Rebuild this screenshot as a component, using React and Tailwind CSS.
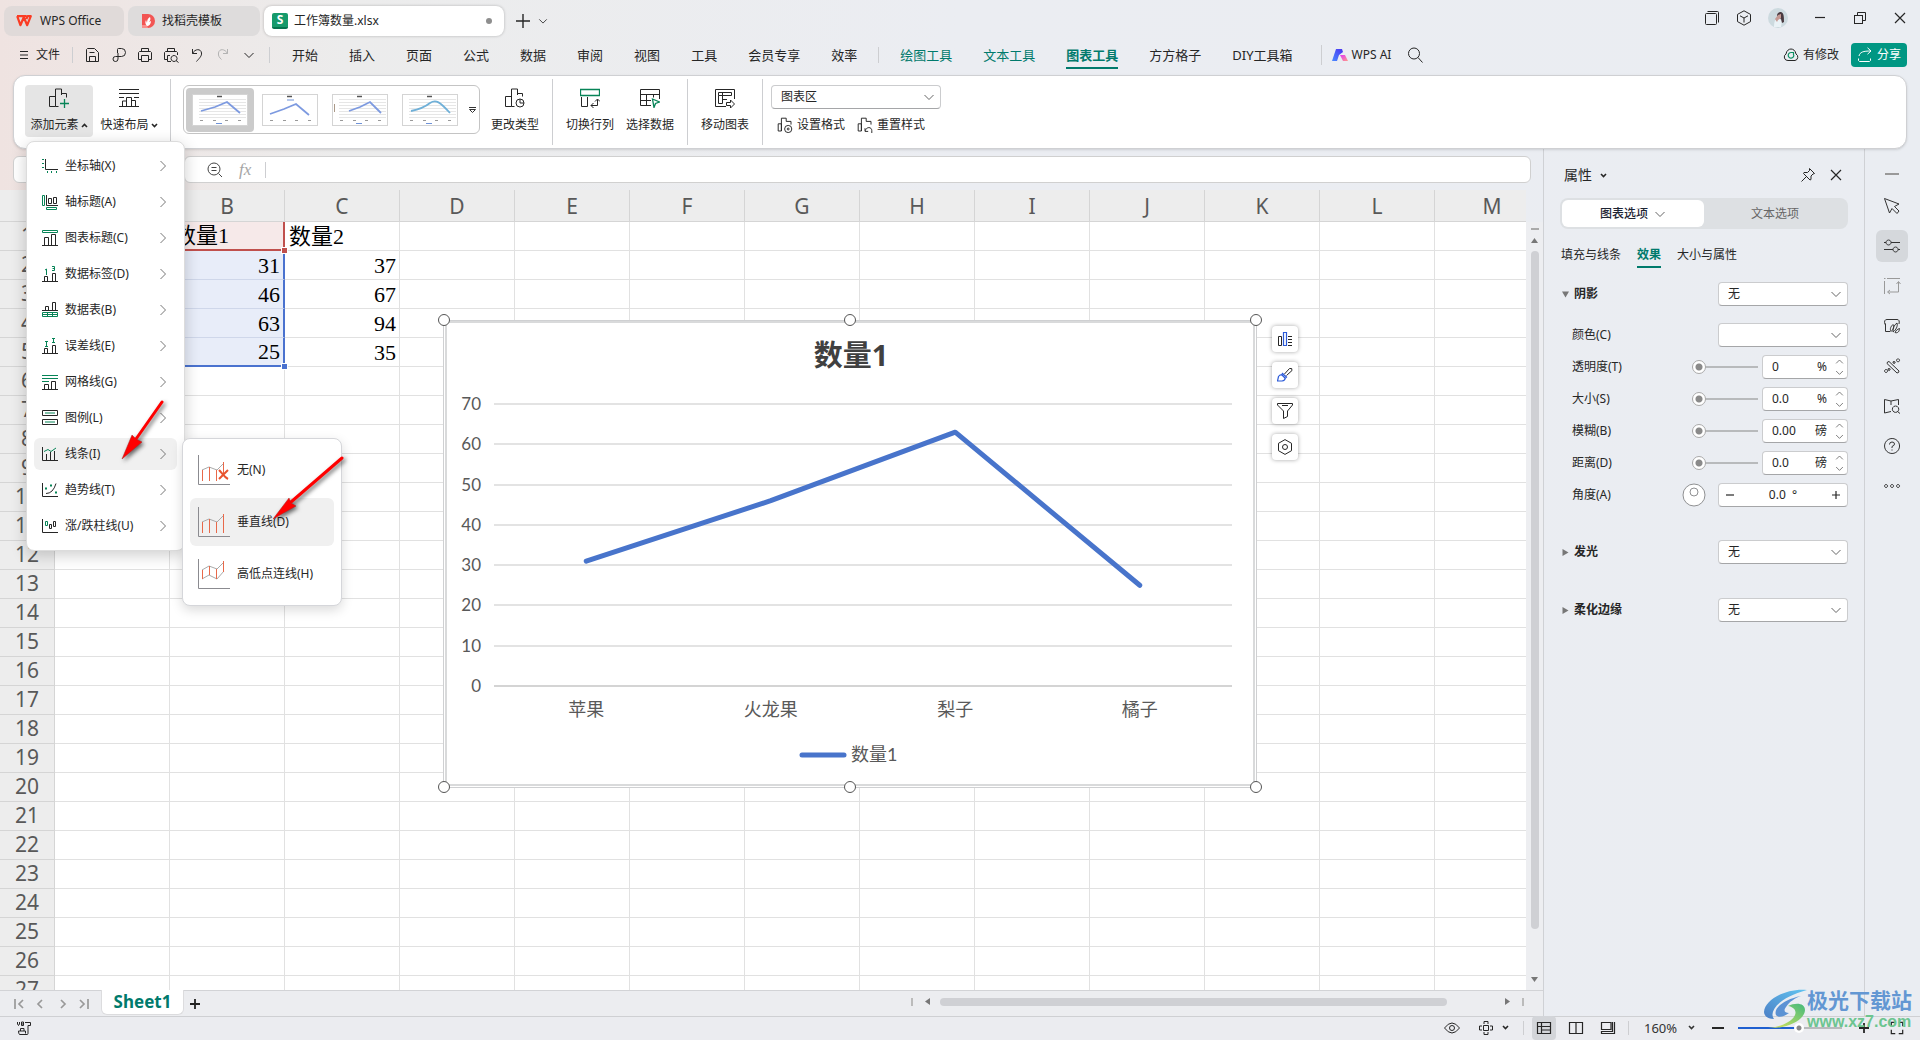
import { Fragment } from "react";

const Icon = ({ children, size = 16, box = 16, className = "" }) => (
    <svg
        width={size}
        height={size}
        viewBox={`0 0 ${box} ${box}`}
        fill="none"
        stroke="currentColor"
        strokeWidth="1"
        className={`shrink-0 ${className}`}
        aria-hidden="true"
    >
        {children}
    </svg>
);

const Chevron = ({ dir = "down", size = 12, className = "" }) => {
    const paths = {
        down: "M1.5 4l4.5 4.5L10.5 4",
        up: "M1.5 8.5L6 4l4.5 4.5",
        right: "M3.5 1L8.500 6l-5 5",
    };
    return (
        <Icon size={size} box={12} className={className}>
            <path d={paths[dir]} />
        </Icon>
    );
};

const Caret = ({ up }) => (
    <svg width="7" height="5" viewBox="0 0 7 5" fill="none" stroke="currentColor" strokeWidth="1.6" aria-hidden="true">
        <path d={up ? "M1 4l2.5-2.5L6 4" : "M1 1l2.5 2.5L6 1"} />
    </svg>
);

const VLine = ({ className = "" }) => <span className={`w-px shrink-0 bg-[#cdced1] ${className}`} />;

const Select = ({ label, value, className = "" }) => (
    <div className={`relative ${className}`}>
        <select
            aria-label={label}
            defaultValue={value}
            className="block h-6 w-full appearance-none rounded border border-[#cbccce] border-b-[#a5a6a8] bg-white pl-[9px] text-xs"
        >
            <option value={value}>{value}</option>
        </select>
        <Chevron className="pointer-events-none absolute top-1.5 right-1.5 text-[#666]" />
    </div>
);

/* ---------- Title bar ---------- */

const TitleBar = () => (
    <div className="flex h-9 items-end justify-between pl-1 pr-3">
        <div className="flex items-center gap-1">
            <button className="flex h-[30px] w-[120px] items-center gap-2 rounded-lg bg-[#e0dad9] pl-3 text-xs">
                <svg width="16" height="12" viewBox="0 0 16 12" aria-hidden="true">
                    <path d="M1 1.2h9.5M1.2 1.2l3.2 9 3.4-8 3.4 8 3.6-9h-3.2l-1.2 3" fill="none" stroke="#fa3c24" strokeWidth="2.2" strokeLinejoin="round" />
                </svg>
                WPS Office
            </button>
            <button className="flex h-[30px] w-[132px] items-center gap-1.5 rounded-lg bg-[#dedcdc] pl-3 text-xs">
                <svg width="16" height="16" viewBox="0 0 16 16" aria-hidden="true">
                    <path d="M2 1h6a7 7 0 0 1 0 14H2z" fill="#f25553" />
                    <path d="M2 12h5l1 3H2z" fill="#f98f8c" />
                    <path d="M7 13c-2-2-2-4-1-6l1 3c0-3 1-5 3-6 1 2 0 4-1 5l2-1c0 3-2 5-4 5z" fill="#fff" />
                </svg>
                找稻壳模板
            </button>
            <button className="flex h-[30px] w-60 items-center gap-1.5 rounded-lg bg-white pl-2 pr-3 text-xs shadow-[0_0_3px_rgba(0,0,0,0.25)]">
                <span className="flex h-4 w-4 items-center justify-center rounded-[2px] border-b-2 border-[#06734e] bg-[#169a6b] text-xs font-bold leading-none text-white">
                    S
                </span>
                工作簿数量.xlsx
                <span className="ml-auto h-1.5 w-1.5 rounded-full bg-[#8e8e8e]" />
            </button>
            <button aria-label="新建" className="ml-1 p-1">
                <Icon size={14} box={14}>
                    <path d="M7 0v14M0 7h14" strokeWidth="1.4" />
                </Icon>
            </button>
            <button aria-label="标签列表">
                <Chevron size={10} />
            </button>
        </div>
        <div className="flex items-center gap-6 pb-2">
            <div className="flex items-center gap-4">
                <button aria-label="窗口">
                    <Icon>
                        <rect x="1.5" y="3.5" width="11" height="11" rx="1" />
                        <path d="M3.5 1.5h10a1 1 0 0 1 1 1v10" />
                    </Icon>
                </button>
                <button aria-label="应用">
                    <Icon>
                        <path d="M8 .8l6.5 3.6v7.2L8 15.200l-6.500-3.600V4.400zM4 5.800L8 8l4-2.200M8 8v4.500" />
                    </Icon>
                </button>
                <svg width="20" height="20" viewBox="0 0 20 20" aria-hidden="true">
                    <circle cx="10" cy="10" r="10" fill="#cddadf" />
                    <path d="M6 19c0-5 1-8 4-9l4 3-1 6z" fill="#eaf2f6" />
                    <path d="M9 8c0-3 2-4 4-4 3 1 3 5 3 10l-2 1-1-4z" fill="#4a3a40" />
                    <path d="M7 11l3-4 3-1v4l-3 2-1 2z" fill="#c59a94" />
                </svg>
            </div>
            <button aria-label="最小化">
                <Icon>
                    <path d="M3 7.5h10" strokeWidth="1.2" />
                </Icon>
            </button>
            <button aria-label="还原">
                <Icon>
                    <rect x="2.5" y="5.5" width="8" height="8" />
                    <path d="M5.5 5.5v-3h8v8h-3" />
                </Icon>
            </button>
            <button aria-label="关闭">
                <Icon>
                    <path d="M3 3l10 10M13 3L3 13" strokeWidth="1.2" />
                </Icon>
            </button>
        </div>
    </div>
);

/* ---------- Menu bar ---------- */

const quickTools = [
    { name: "保存", d: "M1.500 14.500v-12l1-1h7l4 4v9zM4.500 5.500h5M4.500 14.500v-5h6v5" },
    { name: "输出为PDF", d: "M6.500 6V2.500q0-1 1-1h3a4 4 0 0 1 0 8H4.500a2.500 2.500 0 1 0 2.500 2.500V6" },
    { name: "打印", d: "M4.500 4.500v-3h7v3M4 12.500H1.500V5.500l1-1h11l1 1v7H12M4.500 8.500h7v6h-7z" },
    { name: "打印预览", d: "M4.500 4.500v-3h7v3M5 12.500H1.500V5.500l1-1h11l1 1V8M7 8.500H4.500v6H8M11 8.500a3 3 0 1 0 .1 0M13 13.500l2.500 2" },
    { name: "撤销", d: "M3.500 2v4.500H8M3.500 6.500C6 1.500 12 1.500 12.500 6c.5 3-2.500 5.500-5 8.500" },
    { name: "恢复", d: "M12.500 2v4.500H8M12.500 6.500C10 1.500 4 1.500 3.500 6c-.5 3 1 4.500 3 6.500", muted: true },
    { name: "更多", d: "M3.500 6l4.500 4.500L12.500 6" },
];
const menus = ["开始", "插入", "页面", "公式", "数据", "审阅", "视图", "工具", "会员专享", "效率"];
const contextMenus = ["绘图工具", "文本工具", "图表工具", "方方格子", "DIY工具箱"];

const MenuBar = () => (
    <div className="flex h-[39px] items-center pl-5 pr-[13px] pb-0.5">
        <button className="flex items-center gap-2 text-xs">
            <Icon size={8} box={8}>
                <path d="M0 .5h8M0 4h8M0 7.5h8" />
            </Icon>
            文件
        </button>
        <VLine className="mx-3 h-4" />
        <div className="flex items-center gap-2.5">
            {quickTools.map((t) => (
                <button key={t.name} aria-label={t.name} className={t.muted ? "text-[#b3b3b3]" : ""}>
                    <Icon>
                        <path d={t.d} />
                    </Icon>
                </button>
            ))}
        </div>
        <VLine className="ml-3 mr-[22px] h-4" />
        <nav className="flex gap-[31px] text-[13px] leading-5">
            {menus.map((m) => (
                <a key={m} href="#">
                    {m}
                </a>
            ))}
        </nav>
        <VLine className="mx-[21px] h-4" />
        <nav className="flex gap-[31px] text-[13px] leading-5">
            {contextMenus.map((m, i) => (
                <a
                    key={m}
                    href="#"
                    className={
                        i === 2
                            ? "relative font-bold text-[#007a6c] after:absolute after:-bottom-1 after:left-0 after:h-0.5 after:w-full after:bg-[#007a6c]"
                            : i < 2
                              ? "text-[#007a6c]"
                              : ""
                    }
                >
                    {m}
                </a>
            ))}
        </nav>
        <VLine className="ml-7 mr-2.5 h-5" />
        <button className="flex items-center gap-1 text-xs">
            <svg width="16" height="12" viewBox="0 0 16 12" aria-hidden="true">
                <defs>
                    <linearGradient id="ai-blue" x1="0" y1="1" x2="1" y2="0">
                        <stop offset="0" stopColor="#4a8bff" />
                        <stop offset="1" stopColor="#4b32f0" />
                    </linearGradient>
                    <linearGradient id="ai-pink" x1="0" y1="0" x2="1" y2="1">
                        <stop offset="0" stopColor="#e23cf5" />
                        <stop offset="1" stopColor="#ff9a8a" />
                    </linearGradient>
                </defs>
                <path d="M0 12L4 0h6l1 3-4 3-2 6z" fill="url(#ai-blue)" />
                <path d="M8 6h5l3 6h-5z" fill="url(#ai-pink)" />
            </svg>
            WPS AI
        </button>
        <button aria-label="搜索" className="ml-4">
            <Icon>
                <circle cx="7" cy="6.5" r="5.5" />
                <path d="M11 10.5l4.500 5" />
            </Icon>
        </button>
        <div className="ml-auto flex items-center gap-3 text-xs">
            <button className="flex items-center gap-1">
                <Icon>
                    <path d="M5 13.500h7a3.500 3.500 0 0 0 1-6.500C12.500 3.500 10 2 8 2S3.500 3.500 3 7a3.500 3.500 0 0 0 2 6.500z" />
                    <path d="M8 5.500a2.800 2.800 0 1 0 2.800 2.500M7.500 5.500h3v2.500" stroke="#0b8f62" strokeWidth="1.2" />
                </Icon>
                有修改
            </button>
            <button className="flex h-6 w-14 items-center justify-center gap-1 rounded bg-[#009783] text-white">
                <Icon>
                    <path d="M2 9c1-4 4-5 12-5M10.500.8L14 4l-3.500 3.200M1.500 11.500v2l1 1h10l1-1v-2" />
                </Icon>
                分享
            </button>
        </div>
    </div>
);

/* ---------- Ribbon ---------- */

const green = "#078457";

const elementMenu = [
    {
        label: "坐标轴(X)",
        icon: (
            <>
                <path d="M3.5 1v10.500H16" />
                <path d="M0 1.500h2M0 5.500h2M0 9.500h2M5.500 13v2M9.500 13v2M14.500 13v2" stroke={green} />
            </>
        ),
    },
    {
        label: "轴标题(A)",
        icon: (
            <>
                <path d="M4.500 1v10.500H16M6.500 4.500h3v5h-3zM11.500 3.500h3v6h-3z" />
                <path d="M.5 1.500h2v10h-2zM4.500 13.500h10v2h-10z" stroke={green} />
            </>
        ),
    },
    {
        label: "图表标题(C)",
        icon: (
            <>
                <path d="M0 15.500h16M2.500 15V7.500h4V15M9.500 15V4.500h4V15" />
                <path d="M.5.500h15v2H.5z" stroke={green} />
            </>
        ),
    },
    {
        label: "数据标签(D)",
        icon: (
            <>
                <path d="M0 15.500h16M2.500 15v-4.500h3V15M10.500 15V7.500h3V15" />
                <path d="M3 4l1.500-1v6M10 .5h2.500v4H10M10.500 2.500h2" stroke={green} />
            </>
        ),
    },
    {
        label: "数据表(B)",
        icon: (
            <>
                <path d="M0 8.500h16M3.500 8V4.500h3V8M10.500 8V.5h3V8" />
                <path d="M.5 10.500h15v4H.5zM.5 12.500h15M5.500 10.500v4M10.500 10.500v4" stroke={green} />
            </>
        ),
    },
    {
        label: "误差线(E)",
        icon: (
            <>
                <path d="M0 15.500h16M2.500 15v-4.500h3V15M10.500 15V7.500h3V15" />
                <path d="M3 3.500h3M4.500 3.500v5M3 8.500h3M10 .5h3M11.500.5v4M10 4.500h3" stroke={green} />
            </>
        ),
    },
    {
        label: "网格线(G)",
        icon: (
            <>
                <path d="M0 15.500h16M2.500 15v-4.500h4V15M9.500 15V7.500h4V15" />
                <path d="M0 1.500h16M0 4.500h16M0 7.500h7" stroke={green} />
            </>
        ),
    },
    {
        label: "图例(L)",
        icon: (
            <>
                <path d="M.5.500h15v5H.5zM.5 9.500h15v5H.5z" />
                <path d="M3 3h10M3 12h10" stroke={green} />
            </>
        ),
    },
    {
        label: "线条(I)",
        icon: (
            <>
                <path d="M.5 1v13.500H16M4.500 8v6M8.500 6v8M12.500 5v9" />
                <path d="M2 5.500l4-2 3 2 5-3.500" stroke={green} />
            </>
        ),
    },
    {
        label: "趋势线(T)",
        icon: (
            <>
                <path d="M.5 1v13.500H16M4 11.500q7 0 10-10" />
                <path d="M3 6.500h2M8 3.500h2M13 10.500h2" stroke={green} strokeWidth="2" />
            </>
        ),
    },
    {
        label: "涨/跌柱线(U)",
        icon: (
            <>
                <path d="M.5 1v13.500H16M7.500 6.500h2v4h-2zM11.500 3.500h2v5h-2z" />
                <path d="M3.500 3.500h2v4h-2z" stroke={green} />
            </>
        ),
    },
];

const lineMenu = [
    {
        label: "无(N)",
        icon: (
            <>
                <path d="M4 16l7-3 8 3 7-7" stroke="#aaa" />
                <path d="M4.500 27V16M11.500 27V13M18.500 27V16M25.500 20V8" stroke="#e8694a" />
                <path d="M21 16c3 3 5 7 9 9M30 16c-3 3-6 6-9 9" stroke="#e8542f" strokeWidth="2" />
            </>
        ),
    },
    {
        label: "垂直线(D)",
        icon: (
            <>
                <path d="M4 16l7-3 8 3 7-7" stroke="#aaa" />
                <path d="M4.500 27V16M11.500 27V13M18.500 27V16M25.500 27V8" stroke="#e8694a" />
            </>
        ),
    },
    {
        label: "高低点连线(H)",
        icon: (
            <>
                <path d="M4 12l7-4 8 3 7-7M4 21l7-4 8 4 7-8" stroke="#aaa" />
                <path d="M4.500 21v-9M11.500 17V8M18.500 21V11M25.500 14V3" stroke="#e8694a" />
            </>
        ),
    },
];

const LineSubmenu = () => (
    <ul className="absolute left-[148px] top-0 z-10 flex w-40 flex-col gap-1 rounded-lg border border-[#d5d6da] bg-white p-[7px] shadow-[0_4px_12px_rgba(0,0,0,0.15)]">
        {lineMenu.map((m, i) => (
            <li key={m.label}>
                <button
                    className={`flex h-12 w-full items-center gap-[7px] rounded-md pl-2 text-xs whitespace-nowrap ${i === 1 ? "bg-[#f0f0f0]" : ""}`}
                >
                    <Icon size={32} box={32}>
                        <path d="M.5 1v29.500H32" stroke="#8b8b90" />
                        {m.icon}
                    </Icon>
                    {m.label}
                </button>
            </li>
        ))}
    </ul>
);

const ElementMenu = () => (
    <ul className="absolute left-px top-14 z-30 flex w-[159px] flex-col gap-1 rounded-lg border border-[#dcdcdc] bg-white px-[7px] py-2 shadow-[0_4px_16px_rgba(0,0,0,0.2)]">
        {elementMenu.map((m, i) => (
            <li key={m.label} className="relative">
                <button className={`flex h-8 w-full items-center gap-[7px] rounded-md px-2 text-xs ${i === 8 ? "bg-[#f0f0f0]" : ""}`}>
                    <Icon>{m.icon}</Icon>
                    {m.label}
                    <Chevron dir="right" className="ml-auto text-[#777]" />
                </button>
                {i === 8 && <LineSubmenu />}
            </li>
        ))}
    </ul>
);

const RibbonButton = ({ label, icon, caret, active, wide }) => (
    <button
        className={`flex h-[52px] flex-col items-center justify-between rounded pt-[3px] pb-1 text-xs ${wide ? "w-[68px]" : "w-[60px]"} ${active ? "bg-[#e5e5e5]" : ""}`}
    >
        <Icon size={20} box={20}>
            {icon}
        </Icon>
        <span className="flex items-center gap-0.5 leading-4 whitespace-nowrap">
            {label}
            {caret && <Caret up={caret === "up"} />}
        </span>
    </button>
);

const thumbs = [
    "M9 17l14-4 12-5 13 11",
    "M8 20l14-5 12-5 13 11",
    "M17 17l11-4 10-5 11 11",
    "M9 17c10-2 14-4 19-8 6-4 10-1 20 10",
];

const StyleGallery = () => (
    <div className="flex h-[49px] w-[297px] gap-0.5 rounded-md border border-[#c4c4c4] py-0.5 pl-0.5">
        {thumbs.map((d, i) => (
            <button
                key={d}
                aria-label={`样式${i + 1}`}
                className={`flex h-11 w-[68px] shrink-0 items-center justify-center rounded ${i === 0 ? "bg-[#cbcbcb]" : ""}`}
            >
                <svg width="56" height="32" viewBox="0 0 56 32" fill="none" className="bg-white" aria-hidden="true">
                    <rect x=".5" y=".5" width="55" height="31" stroke="#d4d4d4" />
                    {i !== 1 && <path d="M7 5.500h47M7 8.500h47M7 11.500h47M7 14.500h47M7 17.500h47M7 20.500h47M7 23.500h47" stroke="#e6e6e6" />}
                    <path d="M25 2.500h5" stroke="#555" strokeWidth="1.500" />
                    <path d="M8 26.500h3M21 26.500h3M33 26.500h3M46 26.500h3" stroke="#999" />
                    {i === 2 && <path d="M2.500 10v8" stroke="#a98" />}
                    <path d={i === 1 ? "M25 6h7" : "M24 29.500h6"} stroke="#6f93d8" />
                    <path d={d} stroke={i === 3 ? "#6fb0d8" : "#7d9ae0"} strokeWidth="1.800" />
                </svg>
            </button>
        ))}
        <button aria-label="更多样式" className="flex flex-1 items-center justify-center">
            <svg width="7" height="6" viewBox="0 0 7 6" fill="none" stroke="#333" aria-hidden="true">
                <path d="M0 .5h7M.5 2.500h6l-3 3z" />
            </svg>
        </button>
    </div>
);

const bars = "M1.500 17.500h4v-9h-4zM5.500 17.500v-16h6v4";

const RibbonLine = () => <VLine className="mx-[7px] h-[66px] self-center" />;

const Ribbon = () => (
    <div className="relative z-20 mx-[13px] flex h-[74px] items-start rounded-xl border border-[#cfd0d3] bg-white pl-[11px] shadow-sm">
        <div className="flex gap-0.5 pt-[9px]">
            <div className="relative">
                <RibbonButton
                    wide
                    active
                    caret="up"
                    label="添加元素"
                    icon={
                        <>
                            <path d="M.5 18.500h6v-10h-6zM6.500 18.500h3M6.500 10v-9h6v6M12.500 5.500h5v4" />
                            <path d="M15.500 11v9M11 15.500h9" stroke={green} strokeWidth="1.300" />
                        </>
                    }
                />
                <ElementMenu />
            </div>
            <RibbonButton
                wide
                caret="down"
                label="快速布局"
                icon={<path d="M0 1.500h20M0 5.500h20M0 9.500h5M0 18.500h20M3.500 18v-5h4v5M7.500 18V9.500h5V18M12.500 12.500h4V18M15 9.500h5" />}
            />
        </div>
        <RibbonLine />
        <div className="pl-[5px] pt-[9px]">
            <StyleGallery />
        </div>
        <div className="pl-[5px] pt-[9px]">
            <RibbonButton
                label="更改类型"
                icon={
                    <>
                        <path d="M.5 18.500h6v-10h-6zM6.500 18.500h3M6.500 10v-9h6v6M12.500 5.500h5v3" />
                        <circle cx="15" cy="15" r="4" />
                        <path d="M15 11v4h4" />
                    </>
                }
            />
        </div>
        <RibbonLine />
        <div className="flex pt-[9px]">
            <RibbonButton
                label="切换行列"
                icon={
                    <>
                        <path d="M.5 1.500h19v6H.5z" stroke={green} strokeWidth="1.300" />
                        <path d="M1.500 9v9.500h6V9M11 17.500h6.500v-6M13.500 15L11 17.500l2.500 2.500M15 13.500l2.500-2.500 2.500 2.500" />
                    </>
                }
            />
            <RibbonButton
                label="选择数据"
                icon={
                    <>
                        <path d="M11 17.500H.5v-16h19V11M.5 6.500h19M.5 12.500H11M6.500 6.500v11M13.500 6.500v3" />
                        <path d="M12.500 11l7 3-4 1.500-1.500 4z" stroke={green} strokeWidth="1.300" />
                    </>
                }
            />
        </div>
        <RibbonLine />
        <div className="pt-[9px]">
            <RibbonButton
                label="移动图表"
                icon={<path d="M11 18.500H.5v-17h19V11M3.500 4.500h13v3h-13zM3.500 7.500v8h4v-11M7.500 7.500v4H12M11.500 14.500h4v-2.500l4 4-4 4v-2.500h-4z" />}
            />
        </div>
        <RibbonLine />
        <div className="flex flex-col gap-[7px] pl-px pt-[9px]">
            <Select label="图表区域" value="图表区" className="w-[170px]" />
            <div className="flex gap-3 pl-1.5 text-xs leading-[18px]">
                <button className="flex items-center gap-1">
                    <Icon box={20}>
                        <path d={bars} strokeWidth="1.200" />
                        <path d="M11.500 5.500h6v4" strokeWidth="1.200" />
                        <circle cx="14" cy="15" r="4.500" strokeWidth="1.200" />
                        <circle cx="14" cy="15" r="1.200" strokeWidth="1.200" />
                    </Icon>
                    设置格式
                </button>
                <button className="flex items-center gap-1">
                    <Icon box={20}>
                        <path d={bars} strokeWidth="1.200" />
                        <path d="M11.500 5.500h6v4M10 14v4h4M10.500 17c1-5 8-5 8 0v3" strokeWidth="1.200" />
                    </Icon>
                    重置样式
                </button>
            </div>
        </div>
    </div>
);

/* ---------- Sheet ---------- */

const FormulaBar = () => (
    <div className="mr-3 ml-[13px] mt-[7px] flex h-[27px] gap-px">
        <input aria-label="名称框" className="w-[170px] rounded-md border border-[#d0d0d0] bg-white" />
        <div className="flex flex-1 items-center rounded-md border border-[#d0d0d0] bg-white pl-[22px]">
            <Icon className="text-[#444]">
                <circle cx="7" cy="7" r="6" />
                <path d="M11.500 11.500l3.500 3.500M4.500 5.500h5M4.500 8.500h5" />
            </Icon>
            <span className="ml-4 w-4 font-['Liberation_Serif',serif] text-[17px] leading-5 italic text-[#a5a5a5]">fx</span>
            <VLine className="ml-2.5 h-4" />
            <input aria-label="编辑栏" className="h-full min-w-0 flex-1 px-2 text-sm" />
        </div>
    </div>
);

const columns = ["A", "B", "C", "D", "E", "F", "G", "H", "I", "J", "K", "L", "M"];
const rows = Array.from({ length: 27 }, (_, i) => i + 1);
const cells = {
    B1: "数量1", C1: "数量2",
    B2: 31, C2: 37,
    B3: 46, C3: 67,
    B4: 63, C4: 94,
    B5: 25, C5: 35,
};

const Grid = () => (
    <table className="w-[1550px] table-fixed border-separate border-spacing-0">
        <colgroup>
            <col className="w-[55px]" />
            {columns.map((c) => (
                <col key={c} className="w-[115px]" />
            ))}
        </colgroup>
        <thead>
            <tr className="h-8 bg-[#ededed] text-[21px] leading-[30px] text-[#595959]">
                <th className="border-b border-r border-[#d5d5d5]" />
                {columns.map((c) => (
                    <th key={c} className="border-b border-r border-[#d5d5d5] p-0 font-normal">
                        {c}
                    </th>
                ))}
            </tr>
        </thead>
        <tbody>
            {rows.map((r) => (
                <tr key={r} className="h-[29px]">
                    <th className="border-b border-r border-[#d5d5d5] bg-[#ededed] p-0 pb-0.5 text-[21px] leading-[26px] font-normal text-[#595959]">{r}</th>
                    {columns.map((c) => {
                        const value = cells[c + r];
                        const picked = c === "B" && r <= 5;
                        let tone = "border-b border-r border-[#e1e1e1]";
                        if (picked && r === 1) tone = "border-b-2 border-r-2 border-[#c0504d] bg-[#f6e9e9]";
                        else if (picked && r < 5) tone = "border-b border-r-2 border-b-[#cfd7ea] border-r-[#4a72cf] bg-[#e8edf9]";
                        else if (picked) tone = "border-b-2 border-r-2 border-[#4a72cf] bg-[#e8edf9]";
                        return (
                            <td
                                key={c}
                                className={`relative pt-px pr-[3px] pb-0 pl-1 font-['Liberation_Serif','Noto_Sans_CJK_SC',serif] text-[22px] leading-[26px] text-black ${tone} ${typeof value === "number" ? "text-right" : ""}`}
                            >
                                {value}
                                {picked && r === 1 && <span className="absolute -bottom-1 -right-1 z-[1] h-[5px] w-[5px] bg-[#c0504d] outline outline-white" />}
                                {picked && r === 5 && <span className="absolute -bottom-1 -right-1 z-[1] h-[5px] w-[5px] bg-[#4a72cf] outline outline-white" />}
                            </td>
                        );
                    })}
                </tr>
            ))}
        </tbody>
    </table>
);

const series = [
    { name: "苹果", value: 31 },
    { name: "火龙果", value: 46 },
    { name: "梨子", value: 63 },
    { name: "橘子", value: 25 },
];

const Chart = () => {
    const left = 58;
    const right = 796;
    const base = 374;
    const y = (v) => base - (v * 282) / 70;
    const x = (i) => left + ((right - left) / series.length) * (i + 0.5);
    return (
        <svg width="828" height="484" viewBox="0 0 828 484" className="absolute left-[436px] top-[122px]" role="img" aria-label="数量1">
            <rect x="7.5" y="8.5" width="813" height="467" fill="#fff" stroke="#cfd0d2" />
            <rect x="10" y="10" width="808" height="463" fill="#fff" stroke="#d9dadb" strokeWidth="2" />
            <text x="415" y="54" textAnchor="middle" className="fill-[#404040] font-['Noto_Sans','Noto_Sans_CJK_SC',sans-serif] text-[29px] font-bold">
                数量1
            </text>
            {[0, 10, 20, 30, 40, 50, 60, 70].map((v) => (
                <Fragment key={v}>
                    <path d={`M${left} ${Math.round(y(v))}H${right}`} stroke={v ? "#e3e3e3" : "#d4d4d4"} strokeWidth="2" />
                    <text x="45" y={Math.round(y(v)) + 6} textAnchor="end" className="fill-[#595959] font-['Lato',sans-serif] text-[17px]">
                        {v}
                    </text>
                </Fragment>
            ))}
            <polyline
                points={series.map((s, i) => `${x(i)},${y(s.value)}`).join(" ")}
                fill="none"
                stroke="#4874cb"
                strokeWidth="5"
                strokeLinecap="round"
                strokeLinejoin="round"
            />
            {series.map((s, i) => (
                <text key={s.name} x={x(i)} y="404" textAnchor="middle" className="fill-[#595959] font-['Noto_Sans_CJK_SC',sans-serif] text-[18px]">
                    {s.name}
                </text>
            ))}
            <path d="M366 443h42" stroke="#4874cb" strokeWidth="5" strokeLinecap="round" />
            <text x="415" y="449" className="fill-[#595959] font-['Lato','Noto_Sans_CJK_SC',sans-serif] text-[18px]">
                数量1
            </text>
            {[8, 414, 820].map((cx) =>
                [8, 475].map((cy) => <circle key={`${cx}-${cy}`} cx={cx} cy={cy} r="5.5" fill="#fff" stroke="#555" />)
            )}
        </svg>
    );
};

const blue = "#2b5ad8";

const chartButtons = [
    {
        name: "图表元素",
        icon: (
            <>
                <path d="M1.500 5.500h3v9h-3zM11 5.500h4M11 8.500h4M11 11.500h4M11 14.500h4" />
                <path d="M6.500 1.500h3v13h-3z" stroke={blue} strokeWidth="1.200" />
            </>
        ),
    },
    {
        name: "图表样式",
        icon: (
            <>
                <path d="M7.500 7L12.500 1.500q3-1 2.500 2L9.500 8.500" />
                <path d="M.5 14l1-4.500q1.500-2 3-1.500l1-1.500 4 3.500-1.500 1.500q0 2-3 2.500zM5 8l3 3" stroke={blue} strokeWidth="1.200" />
            </>
        ),
    },
    { name: "筛选", icon: <path d="M.5.500h15v1.500L10.500 8v5.500l-4 2V8L.5 2zM5 2.500h6" /> },
    {
        name: "设置",
        icon: (
            <>
                <path d="M8 .6l6.500 3.700v7.400L8 15.400l-6.500-3.700V4.300z" />
                <circle cx="8" cy="8" r="2.500" />
            </>
        ),
    },
];

const SheetTabs = () => (
    <div className="flex h-[26px] items-center border-t border-[#d2d3d6] bg-[#ecedf0] pl-[13px] text-[#999]">
        <div className="flex items-center gap-2.5">
            <button aria-label="第一张">
                <Icon size={12} box={12}>
                    <path d="M2 1v10M10 2L6 6l4 4" strokeWidth="1.700" />
                </Icon>
            </button>
            <button aria-label="上一张">
                <Icon size={12} box={12}>
                    <path d="M7 2L3 6l4 4" strokeWidth="1.700" />
                </Icon>
            </button>
            <button aria-label="下一张">
                <Icon size={12} box={12}>
                    <path d="M4 2l4 4-4 4" strokeWidth="1.700" />
                </Icon>
            </button>
            <button aria-label="最后一张">
                <Icon size={12} box={12}>
                    <path d="M9 1v10M1 2l4 4-4 4" strokeWidth="1.700" />
                </Icon>
            </button>
        </div>
        <button className="ml-2.5 -mt-0.5 h-[25px] w-[83px] rounded-b-md border border-t-0 border-[#dcdcde] bg-white text-[17px] leading-6 font-bold text-[#007a6c]">
            Sheet1
        </button>
        <button aria-label="新建工作表" className="ml-1.5 text-[#222]">
            <Icon size={10} box={10}>
                <path d="M5 0v10M0 5h10" strokeWidth="1.800" />
            </Icon>
        </button>
        <div className="ml-auto flex items-center pb-1">
            <span className="h-2 w-0.5 bg-[#bbb]" />
            <svg width="5" height="7" viewBox="0 0 5 7" className="ml-3" aria-hidden="true">
                <path d="M5 0v7L0 3.500z" fill="#777" />
            </svg>
            <span className="ml-2.5 h-2 w-[507px] rounded bg-[#cfd0d4]" />
            <svg width="5" height="7" viewBox="0 0 5 7" className="ml-[58px]" aria-hidden="true">
                <path d="M0 0v7l5-3.500z" fill="#777" />
            </svg>
            <span className="ml-3 mr-[19px] h-2 w-0.5 bg-[#bbb]" />
        </div>
    </div>
);

const Sheet = () => (
    <main className="flex min-w-0 flex-1 flex-col">
        <FormulaBar />
        <div className="mt-[7px] flex min-h-0 flex-1">
            <div className="relative min-w-0 flex-1 overflow-hidden bg-white">
                <Grid />
                <Chart />
                <div className="absolute left-[1272px] top-[136px] flex flex-col gap-2.5">
                    {chartButtons.map((b) => (
                        <button
                            key={b.name}
                            aria-label={b.name}
                            className="flex h-[26px] w-[26px] items-center justify-center rounded bg-white shadow-[0_0_4px_rgba(0,0,0,0.35)]"
                        >
                            <Icon>{b.icon}</Icon>
                        </button>
                    ))}
                </div>
            </div>
            <div className="mt-8 flex w-[17px] flex-col items-center bg-[#edeef1] pt-1.5 pb-2 text-[#777]">
                <span className="h-0.5 w-2 bg-[#aaa]" />
                <svg width="7" height="5" viewBox="0 0 7 5" className="mt-2" aria-hidden="true">
                    <path d="M0 5h7L3.500 0z" fill="currentColor" />
                </svg>
                <span className="mt-2 mb-12 w-2 flex-1 rounded bg-[#cfd0d4]" />
                <svg width="7" height="5" viewBox="0 0 7 5" aria-hidden="true">
                    <path d="M0 0h7L3.500 5z" fill="currentColor" />
                </svg>
            </div>
        </div>
        <SheetTabs />
    </main>
);

/* ---------- Properties pane ---------- */

const effects = [
    { id: "opacity", label: "透明度(T)", value: "0", unit: "%" },
    { id: "size", label: "大小(S)", value: "0.0", unit: "%" },
    { id: "blur", label: "模糊(B)", value: "0.00", unit: "磅" },
    { id: "distance", label: "距离(D)", value: "0.0", unit: "磅" },
];

const Section = ({ title, open }) => (
    <div className="flex h-6 items-center justify-between">
        <button className="flex items-center gap-[5px] pl-0.5 font-bold">
            <svg width="7" height="7" viewBox="0 0 7 7" aria-hidden="true">
                <path d={open ? "M0 .5h7L3.500 6.500z" : "M.5 0v7l6-3.500z"} fill="#777" />
            </svg>
            {title}
        </button>
        <Select label={title} value="无" className="w-[130px]" />
    </div>
);

const PropertiesPane = () => (
    <aside className="flex w-[321px] flex-col border-l border-[#cfd1d5] px-4 text-xs">
        <div className="mt-3.5 flex h-6 items-center gap-2 pl-1 text-sm">
            属性 <Caret />
            <button aria-label="固定" className="ml-auto">
                <Icon>
                    <path d="M9.500 1.500l5 5-1.500.5-2 2v3.500l-1 .5-6.500-6.500.5-1h3.500l2-2zM6 10l-4.500 4.500" />
                </Icon>
            </button>
            <button aria-label="关闭" className="mr-1 ml-1">
                <Icon>
                    <path d="M3 3l10 10M13 3L3 13" strokeWidth="1.200" />
                </Icon>
            </button>
        </div>
        <div className="mt-[11px] grid h-[31px] grid-cols-2 rounded-lg bg-[#dde0e3] p-0.5">
            <button className="flex items-center justify-center gap-1.5 rounded-md bg-white font-medium text-[#1d2433]">
                图表选项 <Chevron className="text-[#666]" />
            </button>
            <button className="text-[#666]">文本选项</button>
        </div>
        <div className="mt-4 flex h-[23px] gap-4 pl-px leading-5">
            <button className="flex">填充与线条</button>
            <button className="flex border-b-2 border-[#007a6c] font-bold text-[#007a6c]">效果</button>
            <button className="flex">大小与属性</button>
        </div>
        <div className="mt-3.5">
            <Section title="阴影" open />
        </div>
        <div className="mt-[17px] flex flex-col gap-2 pl-3">
            <div className="flex h-6 items-center justify-between">
                颜色(C)
                <Select label="颜色(C)" value="" className="w-[130px]" />
            </div>
            {effects.map((e) => (
                <div key={e.id} className="flex h-6 items-center">
                    <label htmlFor={e.id}>{e.label}</label>
                    <input
                        type="range"
                        aria-label={e.label}
                        defaultValue="0"
                        className="ml-auto w-[66px] appearance-none bg-transparent [&::-webkit-slider-runnable-track]:h-0.5 [&::-webkit-slider-runnable-track]:bg-[#b8babc] [&::-webkit-slider-thumb]:-mt-1.5 [&::-webkit-slider-thumb]:h-3.5 [&::-webkit-slider-thumb]:w-3.5 [&::-webkit-slider-thumb]:appearance-none [&::-webkit-slider-thumb]:rounded-full [&::-webkit-slider-thumb]:border [&::-webkit-slider-thumb]:border-[#aaa] [&::-webkit-slider-thumb]:bg-[radial-gradient(circle,#8a8a8a_3px,white_4px)]"
                    />
                    <div className="ml-1 flex h-6 w-[86px] items-center rounded border border-[#cbccce] border-b-[#a5a6a8] bg-white pl-[9px] pr-[3px]">
                        <input id={e.id} defaultValue={e.value} className="w-10 flex-1" />
                        <span>{e.unit}</span>
                        <span className="ml-2 flex flex-col gap-0.5 text-[#555]">
                            <button aria-label="增加">
                                <Chevron dir="up" size={9} className="block" />
                            </button>
                            <button aria-label="减少">
                                <Chevron size={9} className="block" />
                            </button>
                        </span>
                    </div>
                </div>
            ))}
            <div className="flex h-6 items-center">
                <label htmlFor="angle">角度(A)</label>
                <svg width="24" height="24" viewBox="0 0 24 24" fill="#fff" stroke="#8f9092" className="ml-auto" aria-hidden="true">
                    <circle cx="12" cy="12" r="11" />
                    <circle cx="12" cy="9" r="4" />
                </svg>
                <div className="ml-3 flex h-6 w-[130px] items-center rounded border border-[#cbccce] border-b-[#a5a6a8] bg-white px-[7px]">
                    <button aria-label="减少">
                        <Icon size={8} box={8}>
                            <path d="M0 4h8" strokeWidth="1.200" />
                        </Icon>
                    </button>
                    <input id="angle" defaultValue="0.0  °" className="min-w-0 flex-1 text-center" />
                    <button aria-label="增加">
                        <Icon size={8} box={8}>
                            <path d="M0 4h8M4 0v8" strokeWidth="1.200" />
                        </Icon>
                    </button>
                </div>
            </div>
        </div>
        <div className="mt-[33px] flex flex-col gap-[34px]">
            <Section title="发光" />
            <Section title="柔化边缘" />
        </div>
    </aside>
);

const railTools = [
    { name: "选择", d: "M.5.500l5 14.500 2.500-4.500 5 5 2-2.500-4.500-4.500L15 6z" },
    { name: "属性", d: "M0 4.500h2M7 4.500h9M4.500 2a2.500 2.500 0 1 0 .1 0M0 11.500h9M14 11.500h2M11.500 9a2.500 2.500 0 1 0 .1 0" },
    { name: "裁剪", d: "M.5 3v13M3 .5h13M0 .5h1.500M14.500 4v10H4M12.500 6l2-2.500 2 2.500M6 12l-2.500 2L6 16", muted: true },
    { name: "图库", d: "M6 13.500H1.500v-8M1 6.500q-1.500-5 2-5h10q3 0 2 4.500M7 13.500c-1.500-3 0-5 2-7 1 2 1 4-2 7M9 14c0-4 1-7 4-9 1 3-1 7-4 9M11 14.500c1-2 2-3 4.500-4 0 3-2 5-4.500 4" },
    { name: "工具", d: "M3 5.500q0-2 2-2L15 13q0 2-2 2zM2 11.500a1.500 1.500 0 1 0 .1 0M14 .8a1.500 1.500 0 1 0 .1 0M5 10.500a1 1 0 1 0 .1 0M10 3.500a1 1 0 1 0 .1 0" },
    { name: "查找", d: "M7 13.500L.5 15V1.500L7 3l7.500-1.500V7M7 3v4M11.500 8a3.200 3.200 0 1 0 .1 0M13.500 13.500l2.500 2" },
    { name: "帮助", d: "M8 .5a7.500 7.500 0 1 0 .1 0M5.500 6.500q0-2.500 2.500-2.500t2.500 2q0 1.500-2.500 2.500v1.500M8 11.500v1" },
    { name: "更多", d: "M2 6.500a1.500 1.500 0 1 0 .1 0M8 6.500a1.500 1.500 0 1 0 .1 0M14 6.500a1.500 1.500 0 1 0 .1 0" },
];

const SideRail = () => (
    <aside className="flex w-14 flex-col items-center border-l border-[#cfd1d5] pt-6 pr-px">
        <span className="mb-[15px] h-0.5 w-3.5 bg-[#999]" />
        <div className="flex flex-col gap-2">
            {railTools.map((t, i) => (
                <button
                    key={t.name}
                    aria-label={t.name}
                    className={`flex h-8 w-8 items-center justify-center rounded-md ${i === 1 ? "bg-[#d5d8dc]" : ""} ${t.muted ? "text-[#999]" : "text-[#333]"}`}
                >
                    <Icon className="overflow-visible">
                        <path d={t.d} />
                    </Icon>
                </button>
            ))}
        </div>
    </aside>
);

/* ---------- Status bar ---------- */

const views = [
    { name: "普通视图", d: "M1.500 2.500h13v11h-13zM1.500 6.500h13M5.500 2.500v11M5.500 10h9" },
    { name: "分页预览", d: "M1.500 2.500h13v11h-13zM8 2.500v11" },
    { name: "页面布局", d: "M1.500 2.500h9.500v7H1.500zM14.500 2v11.500H1.500v-2h11V2" },
];

const StatusBar = () => (
    <footer className="flex h-6 items-center border-t border-[#cfd0d3] bg-[#ebecf0] pb-0.5 pl-4 pr-4 text-[13px]">
        <button aria-label="宏">
            <Icon>
                <path d="M1.500 2v2l1 1.500 1-1.500V2M5.500 2v3.500h2V2zM5.500 4h2M9 2.500h5.500v3H12v8q0 1-1 1H3.500q-1-1-1-3.500h7v2.500M4.500 11V8.500H8V11" />
            </Icon>
        </button>
        <div className="ml-auto flex items-center">
            <button aria-label="护眼模式">
                <Icon>
                    <path d="M.5 8Q8-2 15.500 8 8 18 .5 8z" />
                    <circle cx="8" cy="8" r="2.500" />
                </Icon>
            </button>
            <button className="ml-[18px] flex items-center gap-2" aria-label="阅读模式">
                <Icon>
                    <path d="M5.500 5.500h5v5h-5zM6 4V1.500h4V4M6 12v2.500h4V12M4 6H1.500v4H4M12 6h2.500v4H12" />
                </Icon>
                <Caret />
            </button>
            <VLine className="ml-3.5 mr-2 h-3.5" />
            <div className="flex gap-2">
                {views.map((v, i) => (
                    <button key={v.name} aria-label={v.name} className={`flex h-6 w-6 items-center justify-center rounded ${i === 0 ? "bg-[#d3d5d9]" : ""}`}>
                        <Icon>
                            <path d={v.d} strokeWidth="1.200" />
                        </Icon>
                    </button>
                ))}
            </div>
            <VLine className="mx-2 h-3.5" />
            <button className="ml-[7px] flex w-[51px] items-center justify-between leading-5 text-[#333]">
                160% <Caret />
            </button>
            <button aria-label="缩小" className="ml-[17px]">
                <Icon size={12} box={12}>
                    <path d="M0 6h12" strokeWidth="2" />
                </Icon>
            </button>
            <input
                type="range"
                aria-label="缩放"
                defaultValue="60"
                className="ml-3.5 w-[104px] appearance-none bg-transparent [&::-webkit-slider-runnable-track]:h-0.5 [&::-webkit-slider-runnable-track]:bg-[linear-gradient(to_right,#1f5fd0_60%,#b8babc_60%)] [&::-webkit-slider-thumb]:-mt-1 [&::-webkit-slider-thumb]:h-2.5 [&::-webkit-slider-thumb]:w-2.5 [&::-webkit-slider-thumb]:appearance-none [&::-webkit-slider-thumb]:rounded-full [&::-webkit-slider-thumb]:bg-[radial-gradient(circle,#888_2px,white_3px)]"
            />
            <button aria-label="放大" className="ml-4">
                <Icon size={12} box={12}>
                    <path d="M6 1v10M1 6h10" strokeWidth="1.800" />
                </Icon>
            </button>
            <button aria-label="全屏" className="ml-5">
                <Icon size={14}>
                    <path d="M1.500 6V1.500H6M10 1.500h4.500V6M1.500 10v4.500H6M14.500 10v4.500H10" strokeWidth="1.400" />
                </Icon>
            </button>
        </div>
    </footer>
);

const Watermark = () => (
    <div className="pointer-events-none absolute bottom-2 right-2 z-40 flex items-center whitespace-nowrap">
        <svg width="44" height="42" viewBox="0 0 44 42" aria-hidden="true">
            <defs>
                <linearGradient id="wm-blue" x1="0" y1="1" x2="1" y2="0">
                    <stop offset="0" stopColor="#4b7fc6" />
                    <stop offset="1" stopColor="#62c4f0" />
                </linearGradient>
                <linearGradient id="wm-green" x1="0" y1="1" x2="1" y2="0">
                    <stop offset="0" stopColor="#dfe65a" />
                    <stop offset="1" stopColor="#43b97c" />
                </linearGradient>
            </defs>
            <path d="M44 1C24-1 2 10 1 23c0 4 4 7 10 7-6-8 6-22 33-29z" fill="url(#wm-blue)" />
            <path d="M38 7C22 10 10 19 13 26c2 3 8 2 13-2-4 0-6-2-3-6 3-5 9-9 15-11z" fill="#5b92d4" />
            <path d="M25 17c8-4 17-3 17 4 0 9-16 19-37 18 12-1 24-6 27-13 2-5-2-8-7-9z" fill="url(#wm-green)" />
        </svg>
        <div className="flex flex-col">
            <span className="text-[21px] leading-6 font-bold text-[#6397d3]">极光下载站</span>
            <span className="font-['Liberation_Sans',sans-serif] text-[16px] leading-5 font-bold text-[#6cc590]">www.xz7.com</span>
        </div>
    </div>
);

const RedArrow = ({ width, height, className, shaft, head }) => (
    <svg
        width={width}
        height={height}
        viewBox={`0 0 ${width} ${height}`}
        className={`pointer-events-none absolute z-40 overflow-visible drop-shadow-[2px_2px_2px_rgba(0,0,0,0.6)] ${className}`}
        aria-hidden="true"
    >
        <path d={shaft} stroke="#f00" strokeWidth="3" strokeLinecap="round" />
        <path d={head} fill="#f00" stroke="#a22" strokeWidth=".5" />
    </svg>
);

const App = () => {
    return (
        <div className="relative flex h-screen flex-col overflow-hidden bg-[linear-gradient(to_right,#efe3e1_0%,#ececec_18%,#ebedf2_50%,#eaedf2_100%)] font-['Noto_Sans','Noto_Sans_CJK_SC',sans-serif] text-[#262626]">
            <TitleBar />
            <MenuBar />
            <Ribbon />
            <div className="flex min-h-0 flex-1">
                <Sheet />
                <PropertiesPane />
                <SideRail />
            </div>
            <StatusBar />
            <RedArrow width={42} height={58} className="left-[122px] top-[401px]" shaft="M40 1L14 38" head="M0 58l10-24 4 4 6 3z" />
            <RedArrow width={70} height={62} className="left-[273px] top-[457px]" shaft="M69 1L18 45" head="M0 62l16-21 2 5 5 3z" />
            <Watermark />
        </div>
    );
};

export default App;
